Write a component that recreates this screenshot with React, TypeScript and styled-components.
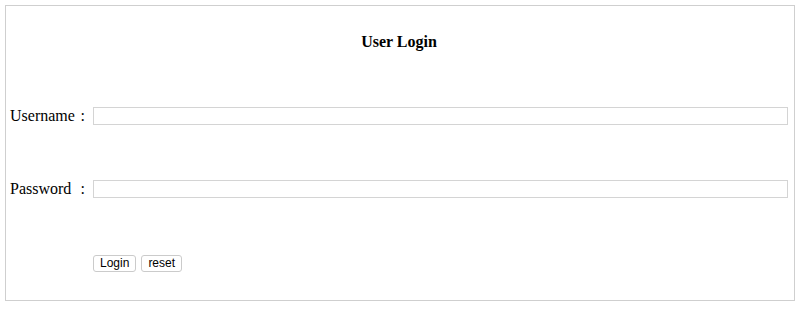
import React from "react";
import styled, { createGlobalStyle } from "styled-components";

const GlobalStyle = createGlobalStyle`
  html, body {
    margin: 0;
    padding: 0;
    background: #ffffff;
  }
  body {
    font-family: "Liberation Serif", "Times New Roman", serif;
    color: #000;
  }
`;

const Panel = styled.div`
  box-sizing: border-box;
  margin: 5px;
  width: 790px;
  height: 296px;
  border: 1px solid #cfcfcf;
  padding: 27px 6px 0 4px;
`;

const Title = styled.h3`
  margin: 0;
  height: 18px;
  line-height: 18px;
  font-size: 16px;
  font-weight: bold;
  text-align: center;
`;

const Row = styled.div<{ $top: number }>`
  display: grid;
  grid-template-columns: 83px 1fr;
  align-items: center;
  margin-top: ${(p) => p.$top}px;
`;

const Label = styled.label`
  display: flex;
  justify-content: space-between;
  font-size: 16px;
  line-height: 18px;
  padding-right: 8px;
`;

const Input = styled.input`
  box-sizing: border-box;
  width: 695px;
  height: 18px;
  margin: 0;
  padding: 0 4px;
  border: 1px solid #d4d4d4;
  outline: none;
  font-size: 13px;
`;

const Actions = styled.div`
  display: flex;
  gap: 5px;
`;

const Button = styled.button`
  box-sizing: border-box;
  height: 17px;
  margin: 0;
  padding: 0 6px;
  border: 1px solid #cbcbcb;
  border-radius: 3px;
  background: #fff;
  font-family: "Liberation Sans", Arial, sans-serif;
  font-size: 12px;
  line-height: 15px;
  color: #000;
`;

export default function App() {
  return (
    <>
      <GlobalStyle />
      <Panel>
        <Title>User Login</Title>
        <Row $top={56}>
          <Label>
            <span>Username</span>
            <span>:</span>
          </Label>
          <Input type="text" />
        </Row>
        <Row $top={55}>
          <Label>
            <span>Password</span>
            <span>:</span>
          </Label>
          <Input type="password" />
        </Row>
        <Row $top={57}>
          <span />
          <Actions>
            <Button>Login</Button>
            <Button>reset</Button>
          </Actions>
        </Row>
      </Panel>
    </>
  );
}
